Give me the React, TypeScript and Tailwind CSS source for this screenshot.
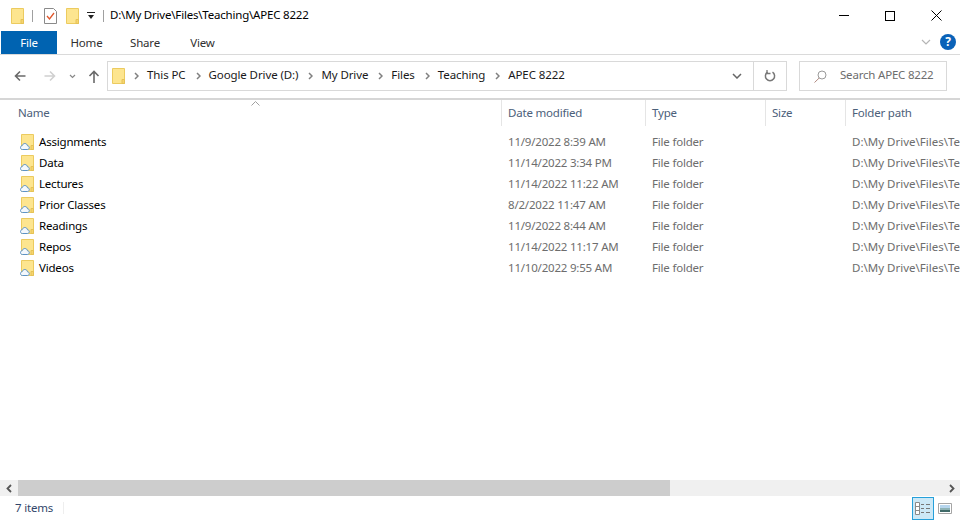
const rows = [
  ['Assignments', '11/9/2022 8:39 AM'],
  ['Data', '11/14/2022 3:34 PM'],
  ['Lectures', '11/14/2022 11:22 AM'],
  ['Prior Classes', '8/2/2022 11:47 AM'],
  ['Readings', '11/9/2022 8:44 AM'],
  ['Repos', '11/14/2022 11:17 AM'],
  ['Videos', '11/10/2022 9:55 AM'],
]

const crumbs = ['This PC', 'Google Drive (D:)', 'My Drive', 'Files', 'Teaching', 'APEC 8222']

function Folder({ className = '' }: { className?: string }) {
  return (
    <svg viewBox="0 0 13 16" className={className}>
      <path d="M.5.5h12v15H.5z" fill="#fde58f" stroke="#eccb5f" />
      <path d="M10 11.500h2.500v4H10z" fill="#f6d56e" stroke="#e5c257" />
    </svg>
  )
}

function CloudFolder() {
  return (
    <svg viewBox="0 0 14 16" className="h-4 w-[14px] shrink-0">
      <path d="M1.500.5h12v15h-12z" fill="#fde58f" stroke="#eccb5f" />
      <path d="M11 11.500h2.500v4H11z" fill="#f6d56e" stroke="#e5c257" />
      <path
        d="M2.500 15.500C1 15.500.5 14.500.5 13.500c0-1 .7-1.800 1.700-1.800.4-1.300 1.300-2.200 2.600-2.200 1.500 0 2.500 1 2.700 2.300 1 0 1.800.8 1.800 1.900 0 1-.8 1.800-1.900 1.800z"
        fill="#f4f8fc"
        stroke="#5d93c7"
      />
    </svg>
  )
}

function Chevron() {
  return (
    <svg viewBox="0 0 5 8" className="h-2 w-[5px] shrink-0">
      <path d="M1 1l3 3-3 3" fill="none" stroke="#808080" strokeWidth="1.500" />
    </svg>
  )
}

export default function App() {
  return (
    <div className="flex h-[520px] w-[960px] flex-col overflow-hidden bg-white font-['Noto_Sans',sans-serif] text-[11.5px] tracking-[-0.2px] text-[#1e1e1e]">
      {/* title bar */}
      <div className="flex h-[31px] items-center">
        <Folder className="ml-[11px] h-4 w-[13px]" />
        <div className="ml-[8px] h-[12px] w-px bg-[#a0a0a0]" />
        <svg viewBox="0 0 13 16" className="ml-[11px] h-4 w-[13px]">
          <path d="M.5.5h9l3 3v12H.5z" fill="#fff" stroke="#8a8a8a" />
          <path d="M3 8l2.500 3L10 5" fill="none" stroke="#e0552a" strokeWidth="1.300" />
        </svg>
        <Folder className="ml-[9px] h-4 w-[13px]" />
        <svg viewBox="0 0 8 7" className="ml-[8px] h-[7px] w-2">
          <path d="M0 0h8v1H0zM1 3h6L4 7z" fill="#222" />
        </svg>
        <div className="ml-[8px] h-[12px] w-px bg-[#a0a0a0]" />
        <span className="ml-[6px] pb-[2px] text-black">D:\My Drive\Files\Teaching\APEC 8222</span>
        <div className="ml-auto flex items-center">
          <div className="mr-[36px] h-px w-[10px] bg-black" />
          <div className="mr-[36px] size-[10px] border border-black" />
          <svg viewBox="0 0 11 11" className="mr-[18px] size-[11px]">
            <path d="M.5.5l10 10M10.500.5l-10 10" stroke="#000" />
          </svg>
        </div>
      </div>

      {/* ribbon tabs */}
      <div className="flex h-[24px] items-stretch border-b border-[#dadada]">
        <div className="ml-px flex w-[56px] items-center justify-center bg-[#0063b1] text-white">File</div>
        <div className="flex w-[59px] items-center justify-center text-[#303030]">Home</div>
        <div className="flex w-[58px] items-center justify-center text-[#303030]">Share</div>
        <div className="flex w-[57px] items-center justify-center text-[#303030]">View</div>
        <div className="ml-auto mr-[4px] flex items-center gap-[9px] pb-px">
          <svg viewBox="0 0 10 6" className="h-[6px] w-[10px]">
            <path d="M1 1l4 4 4-4" fill="none" stroke="#b5b5b5" strokeWidth="1.200" />
          </svg>
          <div className="flex size-4 items-center justify-center rounded-full bg-[#0a62b8] text-[12px] font-bold text-white">?</div>
        </div>
      </div>

      {/* nav bar */}
      <div className="flex h-[45px] items-center border-b-2 border-[#d6d6d6] pb-px">
        <svg viewBox="0 0 12 12" className="ml-[14px] size-3">
          <path d="M11.500 6H1.500M6 1.500L1.500 6 6 10.500" fill="none" stroke="#6a6a6a" strokeWidth="1.600" />
        </svg>
        <svg viewBox="0 0 12 12" className="ml-[18px] size-3">
          <path d="M.5 6h10M6 1.500L10.500 6 6 10.500" fill="none" stroke="#d0d0d0" strokeWidth="1.600" />
        </svg>
        <svg viewBox="0 0 7 5" className="ml-[13px] h-[5px] w-[7px]">
          <path d="M1 1l2.500 2.500L6 1" fill="none" stroke="#888" strokeWidth="1.200" />
        </svg>
        <svg viewBox="0 0 12 13" className="ml-[12px] h-[13px] w-3">
          <path d="M6 13V1.500M1.500 6L6 1.500 10.500 6" fill="none" stroke="#6a6a6a" strokeWidth="1.600" />
        </svg>
        <div className="ml-[7px] flex h-[30px] w-[680px] items-center border border-[#d9d9d9]">
          <Folder className="ml-[4px] h-4 w-[13px]" />
          <div className="ml-[9px] flex items-center gap-[10px] tracking-[-0.1px] text-[#1a1a1a]">
            {crumbs.map((c) => (
              <div key={c} className="flex items-center gap-[8px]">
                <Chevron />
                <span className="pb-[2px]">{c}</span>
              </div>
            ))}
          </div>
          <svg viewBox="0 0 10 6" className="ml-auto mr-[11px] h-[6px] w-[10px]">
            <path d="M1 1l4 4 4-4" fill="none" stroke="#666" strokeWidth="1.500" />
          </svg>
          <div className="flex h-full w-[33px] items-center justify-center border-l border-[#d9d9d9]">
            <svg viewBox="0 0 12 12" className="size-3">
              <path d="M8.500 2.200A4.600 4.600 0 1 1 3.500 2.200" fill="none" stroke="#777" strokeWidth="1.500" />
              <path d="M3 0v3.500h3.500" fill="none" stroke="#777" strokeWidth="1.300" />
            </svg>
          </div>
        </div>
        <div className="ml-[12px] flex h-[30px] w-[148px] items-center border border-[#d9d9d9] text-[#6d6d6d]">
          <svg viewBox="0 0 13 13" className="ml-[14px] size-[13px]">
            <circle cx="8" cy="5" r="4" fill="none" stroke="#9a9a9a" />
            <path d="M5.200 8L.5 12.500" stroke="#b08a80" />
          </svg>
          <span className="ml-[13px] pb-[2px]">Search APEC 8222</span>
        </div>
      </div>

      {/* list */}
      <div className="min-h-0 flex-1 overflow-hidden">
        <div className="relative grid h-[26px] grid-cols-[501px_144px_120px_80px_200px] text-[#4c607a]">
          <div className="absolute left-[251px] top-px">
            <svg viewBox="0 0 9 5" className="h-[5px] w-[9px]">
              <path d="M.5 4.500l4-4 4 4" fill="none" stroke="#a0a0a0" />
            </svg>
          </div>
          <div className="flex items-center pl-[18px]">Name</div>
          <div className="flex items-center border-l border-[#e5e5e5] pl-[6px]">Date modified</div>
          <div className="flex items-center border-l border-[#e5e5e5] pl-[6px]">Type</div>
          <div className="flex items-center border-l border-[#e5e5e5] pl-[6px]">Size</div>
          <div className="flex items-center border-l border-[#e5e5e5] pl-[6px]">Folder path</div>
        </div>
        <div className="mt-[5px] flex flex-col">
          {rows.map(([name, date]) => (
            <div key={name} className="grid h-[21px] grid-cols-[501px_144px_120px_80px_200px] items-center whitespace-nowrap">
              <div className="flex items-center gap-[5px] pl-[20px] text-black">
                <CloudFolder />
                <span>{name}</span>
              </div>
              <div className="pl-[7px] text-[#6d6d6d]">{date}</div>
              <div className="pl-[7px] text-[#6d6d6d]">File folder</div>
              <div />
              <div className="pl-[7px] tracking-[0px] text-[#6d6d6d]">D:\My Drive\Files\Teaching\APEC 8222</div>
            </div>
          ))}
        </div>
      </div>

      {/* horizontal scrollbar */}
      <div className="flex h-[16px] items-stretch bg-[#f0f0f0]">
        <div className="flex w-[18px] items-center justify-center">
          <svg viewBox="0 0 6 9" className="h-[9px] w-[6px]">
            <path d="M5 1L1.500 4.500 5 8" fill="none" stroke="#555" strokeWidth="1.800" />
          </svg>
        </div>
        <div className="w-[652px] bg-[#cdcdcd]" />
        <div className="ml-auto flex w-[17px] items-center justify-center">
          <svg viewBox="0 0 6 9" className="h-[9px] w-[6px]">
            <path d="M1 1l3.500 3.500L1 8" fill="none" stroke="#555" strokeWidth="1.800" />
          </svg>
        </div>
      </div>

      {/* status bar */}
      <div className="flex h-[24px] items-center">
        <span className="ml-[15px] text-[#32466a]">7 items</span>
        <div className="ml-[10px] h-[12px] w-px bg-[#eeeeee]" />
        <div className="ml-auto flex items-center">
          <div className="flex h-[23px] w-[22px] items-center justify-center border border-[#26a0da] bg-[#cce8f6]">
            <svg viewBox="0 0 16 13" className="h-[13px] w-4">
              <path d="M.5.5h4v12h-4zM.5 4.500h4M.5 8.500h4" fill="#fff" stroke="#8a8a8a" />
              <path d="M6 2.500h3M11 2.500h4M6 6.500h3M11 6.500h4M6 10.500h3M11 10.500h4" stroke="#777" />
            </svg>
          </div>
          <div className="ml-[4px] mr-[8px] flex h-[11px] w-[14px]">
            <svg viewBox="0 0 14 11" className="h-[11px] w-[14px]">
              <path d="M.5.500h13v10H.5z" fill="#fff" stroke="#a5a5a5" />
              <path d="M2 2h10v3H2z" fill="#b7d6ee" />
              <path d="M2 5h10v2H2z" fill="#8fb3b5" />
              <path d="M2 7h10v2H2z" fill="#3f6a68" />
            </svg>
          </div>
        </div>
      </div>
    </div>
  )
}
